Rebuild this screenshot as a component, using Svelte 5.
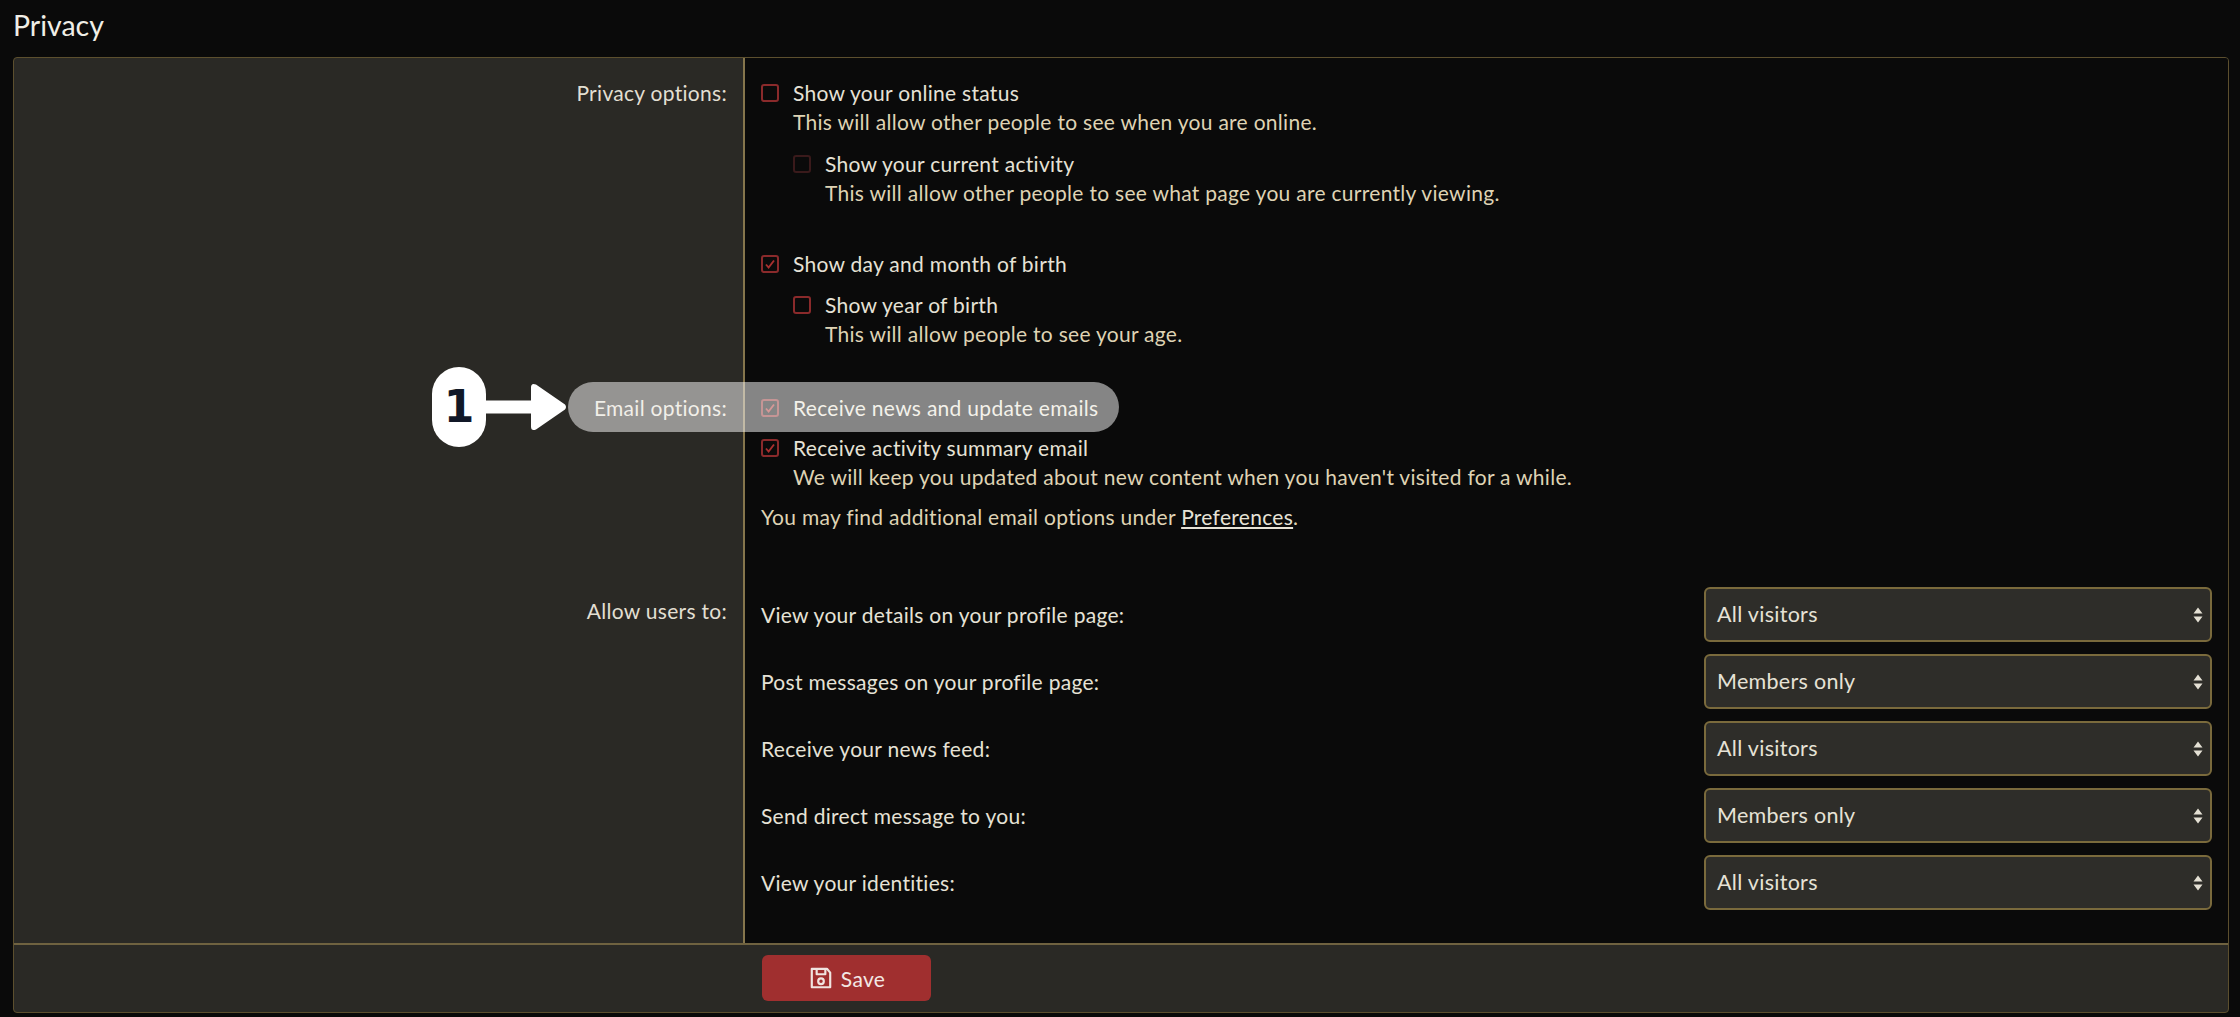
<script lang="ts">
  type Opt = { label: string; checked: boolean; hint?: string; dim?: boolean; sub?: Opt };

  const privacy: Opt[] = [
    {
      label: 'Show your online status',
      checked: false,
      hint: 'This will allow other people to see when you are online.',
      sub: {
        label: 'Show your current activity',
        checked: false,
        dim: true,
        hint: 'This will allow other people to see what page you are currently viewing.'
      }
    },
    {
      label: 'Show day and month of birth',
      checked: true,
      sub: { label: 'Show year of birth', checked: false, hint: 'This will allow people to see your age.' }
    }
  ];

  const allow = [
    { label: 'View your details on your profile page:', value: 'All visitors' },
    { label: 'Post messages on your profile page:', value: 'Members only' },
    { label: 'Receive your news feed:', value: 'All visitors' },
    { label: 'Send direct message to you:', value: 'Members only' },
    { label: 'View your identities:', value: 'All visitors' }
  ];
</script>

{#snippet box(checked: boolean, dim = false)}
  <span class="box" class:dim>
    {#if checked}
      <svg viewBox="0 0 18 18" width="18" height="18"><path d="M5 9.500l2.600 3L13 5.500" fill="none" stroke="#a8302f" stroke-width="1.900" /></svg>
    {/if}
  </span>
{/snippet}

{#snippet option(o: Opt)}
  <div class="opt">
    {@render box(o.checked, o.dim)}
    <div>
      <div class="opt-label">{o.label}</div>
      {#if o.hint}<div class="hint">{o.hint}</div>{/if}
    </div>
  </div>
{/snippet}

<main class="page">
  <h2 class="title">Privacy</h2>

  <section class="panel">
    <div class="row row-privacy">
      <div class="side">Privacy options:</div>
      <div class="body">
        {#each privacy as p}
          <div class="group">
            {@render option(p)}
            {#if p.sub}
              <div class="nested">{@render option(p.sub)}</div>
            {/if}
          </div>
        {/each}
      </div>
    </div>

    <div class="row row-email">
      <div class="side">Email options:</div>
      <div class="body">
        {@render option({ label: 'Receive news and update emails', checked: true })}
        <div class="second">
          {@render option({
            label: 'Receive activity summary email',
            checked: true,
            hint: "We will keep you updated about new content when you haven't visited for a while."
          })}
        </div>
        <p class="note">You may find additional email options under <a href="#prefs">Preferences</a>.</p>
      </div>
    </div>

    <div class="row row-allow">
      <div class="side">Allow users to:</div>
      <div class="body">
        {#each allow as a}
          <div class="allow-row">
            <span class="allow-label">{a.label}</span>
            <div class="select">
              <span>{a.value}</span>
              <svg viewBox="0 0 10 16" width="10" height="16"><path d="M5 0.500L9.500 6.500H0.500zM5 15.500L0.500 9.500H9.500z" fill="#e4e0d4" /></svg>
            </div>
          </div>
        {/each}
      </div>
    </div>

    <div class="foot">
      <button class="save">
        <svg viewBox="0 0 24 24" width="26" height="26" fill="none" stroke="#f0e4e0" stroke-width="2" stroke-linejoin="round">
          <path d="M3.500 3.500h14l3 3.500v13.500h-17z" />
          <path d="M8 3.500v5h8v-5" />
          <circle cx="12" cy="15" r="2.600" />
        </svg>
        Save
      </button>
    </div>
  </section>

  <div class="spot"></div>
  <div class="marker">1</div>
  <svg class="arrow" viewBox="0 0 81 50" width="81" height="50">
    <path d="M0 18.500h45v-13q0-5 5-3l29 20q2 2.500 0 5l-29 20q-5 2-5-3v-13h-45z" fill="#fff" />
  </svg>
</main>

<style>
  :global(body) {
    margin: 0;
    background: #0a0a0a;
  }

  .page {
    position: relative;
    height: 1017px;
    padding: 0 11px 0 13px;
    box-sizing: border-box;
    font-family: Lato, "Noto Sans", sans-serif;
    font-size: 21px;
    letter-spacing: 0.29px;
    line-height: 29px;
    color: #e6e2d6;
    overflow: hidden;
  }

  .title {
    margin: 0;
    padding-top: 8px;
    height: 57px;
    box-sizing: border-box;
    font-size: 28.5px;
    line-height: 34px;
    font-weight: 400;
    letter-spacing: 0;
    color: #f0eee6;
  }

  .panel {
    border: 1px solid #5c4f2e;
    border-radius: 4px;
    background: #2a2925;
    overflow: hidden;
  }

  .row {
    display: grid;
    grid-template-columns: 729px 1fr;
  }

  .side {
    padding-right: 16px;
    text-align: right;
    color: #e2dfd2;
  }

  .body {
    background: #0a0a0a;
    border-left: 2px solid #85754c;
    padding-left: 16px;
    padding-right: 16px;
  }

  .row-privacy .side,
  .row-privacy .body {
    padding-top: 20px;
  }

  .row-email .side,
  .row-email .body {
    padding-top: 45px;
  }

  .row-allow .side {
    padding-top: 65px;
  }

  .row-allow .body {
    padding-top: 56px;
    padding-bottom: 33px;
  }

  .group + .group {
    margin-top: 42px;
  }

  .opt {
    display: flex;
    gap: 14px;
  }

  .box {
    flex: none;
    width: 18px;
    height: 18px;
    margin-top: 6px;
    box-sizing: border-box;
    border: 2px solid #8a2a2b;
    border-radius: 3px;
    position: relative;
  }

  .box svg {
    position: absolute;
    left: -2px;
    top: -2px;
  }

  .box.dim {
    border-color: #3a1a1b;
  }

  .hint {
    color: #dfd3b4;
  }

  .nested {
    margin: 13px 0 0 32px;
  }

  .group + .group .nested {
    margin-top: 12px;
  }

  .second {
    margin-top: 11px;
  }

  .note {
    margin: 11px 0 0;
    color: #dfd3b4;
  }

  .note a {
    color: #e6e2d6;
  }

  .allow-row {
    display: flex;
    justify-content: space-between;
    align-items: center;
  }

  .allow-row + .allow-row {
    margin-top: 12px;
  }

  .select {
    width: 508px;
    height: 55px;
    box-sizing: border-box;
    display: flex;
    align-items: center;
    justify-content: space-between;
    padding: 0 7px 0 11px;
    background: #2e2d29;
    border: 2px solid #7a6a3c;
    border-radius: 6px;
    color: #e6e2d6;
    font-size: 21.5px;
  }

  .foot {
    border-top: 2px solid #6f6240;
    padding: 10px 0 11px 748px;
    display: flex;
  }

  .save {
    width: 169px;
    height: 46px;
    border: none;
    border-radius: 6px;
    background: #a02f2f;
    color: #f3e8e4;
    font: inherit;
    letter-spacing: inherit;
    display: flex;
    align-items: center;
    justify-content: center;
    gap: 7px;
  }

  .spot {
    position: absolute;
    left: 568px;
    top: 382px;
    width: 551px;
    height: 50px;
    border-radius: 25px;
    background: rgba(255, 255, 255, 0.5);
  }

  .marker {
    position: absolute;
    left: 432px;
    top: 367px;
    width: 54px;
    height: 80px;
    border-radius: 27px;
    background: #fff;
    color: #111827;
    font-family: "DejaVu Sans", sans-serif;
    font-size: 44px;
    line-height: 80px;
    font-weight: 700;
    letter-spacing: 0;
    text-align: center;
  }

  .arrow {
    position: absolute;
    left: 486px;
    top: 382px;
  }
</style>
